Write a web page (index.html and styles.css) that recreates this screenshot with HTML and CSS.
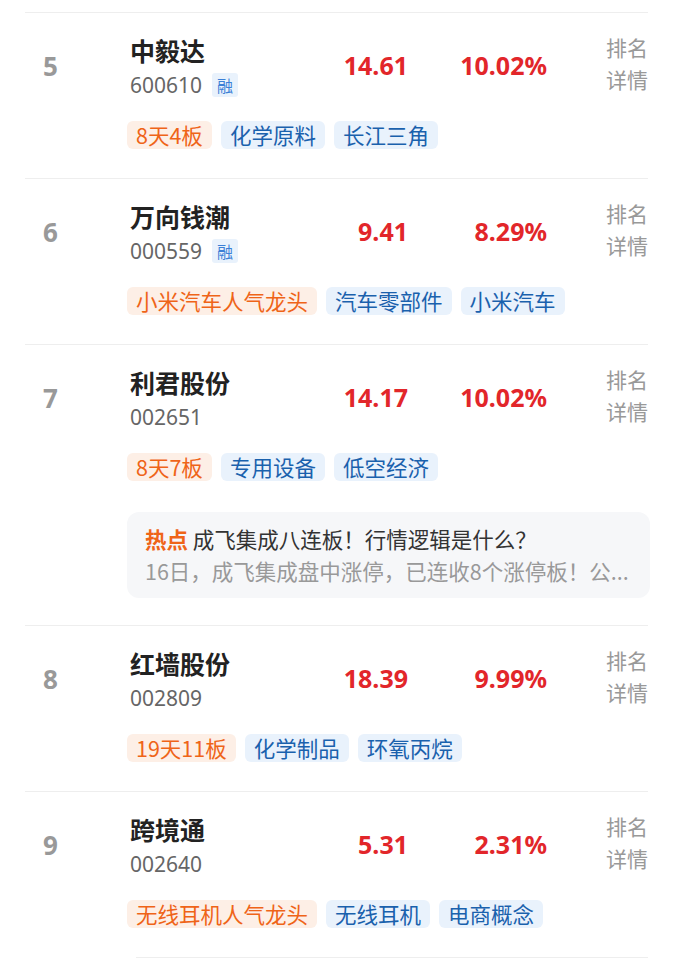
FILE: index.html
```html
<!DOCTYPE html>
<html lang="zh-CN">
<head>
    <meta charset="UTF-8">
    <meta name="viewport" content="width=device-width, initial-scale=1.0">
    <title>涨幅排行</title>
    <link rel="stylesheet" href="styles.css">
</head>
<body>
    <div class="list">
        <div class="row">
            <div class="head">
                <div class="rank">5</div>
                <div class="info">
                    <div class="name">中毅达</div>
                    <div class="code">600610 <span class="rong">融</span></div>
                </div>
                <div class="price">14.61</div>
                <div class="pct">10.02%</div>
                <div class="side">排名<br>详情</div>
            </div>
            <div class="tags">
                <span class="tag hot">8天4板</span>
                <span class="tag">化学原料</span>
                <span class="tag">长江三角</span>
            </div>
        </div>

        <div class="row">
            <div class="head">
                <div class="rank">6</div>
                <div class="info">
                    <div class="name">万向钱潮</div>
                    <div class="code">000559 <span class="rong">融</span></div>
                </div>
                <div class="price">9.41</div>
                <div class="pct">8.29%</div>
                <div class="side">排名<br>详情</div>
            </div>
            <div class="tags">
                <span class="tag hot">小米汽车人气龙头</span>
                <span class="tag">汽车零部件</span>
                <span class="tag">小米汽车</span>
            </div>
        </div>

        <div class="row with-news">
            <div class="head">
                <div class="rank">7</div>
                <div class="info">
                    <div class="name">利君股份</div>
                    <div class="code">002651</div>
                </div>
                <div class="price">14.17</div>
                <div class="pct">10.02%</div>
                <div class="side">排名<br>详情</div>
            </div>
            <div class="tags">
                <span class="tag hot">8天7板</span>
                <span class="tag">专用设备</span>
                <span class="tag">低空经济</span>
            </div>
            <div class="news">
                <div class="news-title"><b>热点</b> 成飞集成八连板！行情逻辑是什么？</div>
                <div class="news-text">16日，成飞集成盘中涨停，已连收8个涨停板！公...</div>
            </div>
        </div>

        <div class="row">
            <div class="head">
                <div class="rank">8</div>
                <div class="info">
                    <div class="name">红墙股份</div>
                    <div class="code">002809</div>
                </div>
                <div class="price">18.39</div>
                <div class="pct">9.99%</div>
                <div class="side">排名<br>详情</div>
            </div>
            <div class="tags">
                <span class="tag hot">19天11板</span>
                <span class="tag">化学制品</span>
                <span class="tag">环氧丙烷</span>
            </div>
        </div>

        <div class="row">
            <div class="head">
                <div class="rank">9</div>
                <div class="info">
                    <div class="name">跨境通</div>
                    <div class="code">002640</div>
                </div>
                <div class="price">5.31</div>
                <div class="pct">2.31%</div>
                <div class="side">排名<br>详情</div>
            </div>
            <div class="tags">
                <span class="tag hot">无线耳机人气龙头</span>
                <span class="tag">无线耳机</span>
                <span class="tag">电商概念</span>
            </div>
        </div>
        <div class="tail"></div>
    </div>
</body>
</html>
```

FILE: styles.css
```css
body {
    margin: 0;
    background: #fff;
    font-family: "Noto Sans", "Noto Sans CJK SC", sans-serif;
    color: #222;
}
.list {
    padding-top: 12px;
    margin-left: 25px;
    width: 623px;
}
.row {
    border-top: 1px solid #eeeeee;
    padding: 21px 0 29px 0;
}
.row.with-news {
    padding-bottom: 27px;
}
.head {
    display: grid;
    grid-template-columns: 105px 1fr 80px 139px 101px;
    align-items: center;
}
.rank {
    padding-left: 18px;
    padding-bottom: 2px;
    font-size: 26px;
    font-weight: 700;
    color: #999;
}
.name {
    font-family: "Noto Sans CJK SC", sans-serif;
    font-size: 25px;
    font-weight: 700;
    line-height: 32px;
    color: #222;
}
.code {
    display: flex;
    align-items: center;
    margin-top: 4px;
    font-size: 21px;
    line-height: 30px;
    color: #666;
}
.rong {
    display: inline-block;
    margin-left: 10px;
    padding: 0 5px;
    height: 24px;
    line-height: 24px;
    font-family: "Noto Sans CJK SC", sans-serif;
    font-size: 16px;
    color: #3b7fd6;
    background: #e9f2fc;
    border-radius: 3px;
}
.price, .pct {
    padding-bottom: 4px;
    text-align: right;
    font-size: 25px;
    font-weight: 700;
    color: #e2262a;
}
.side {
    align-self: start;
    margin-top: -3px;
    padding-left: 59px;
    font-family: "Noto Sans CJK SC", sans-serif;
    font-size: 21px;
    line-height: 32px;
    color: #999;
}
.tags {
    display: flex;
    gap: 9px;
    margin: 21px 0 0 102px;
}
.tag {
    height: 28px;
    line-height: 28px;
    padding: 0 9px;
    border-radius: 6px;
    font-family: "Noto Sans CJK SC", sans-serif;
    font-size: 21.5px;
    color: #1a61ad;
    background: #e9f2fc;
}
.tag.hot {
    color: #ef6418;
    background: #fdefe6;
}
.news {
    margin: 31px -2px 0 102px;
    padding: 11px 14px 11px 18px;
    background: #f6f7f9;
    border-radius: 12px;
    font-family: "Noto Sans CJK SC", sans-serif;
    font-size: 21.5px;
    line-height: 32px;
}
.news-title {
    color: #333;
}
.news-title b {
    color: #ef6418;
}
.news-text {
    color: #999;
    white-space: nowrap;
}
.tail {
    border-top: 1px solid #eeeeee;
    margin-left: 111px;
}
```
